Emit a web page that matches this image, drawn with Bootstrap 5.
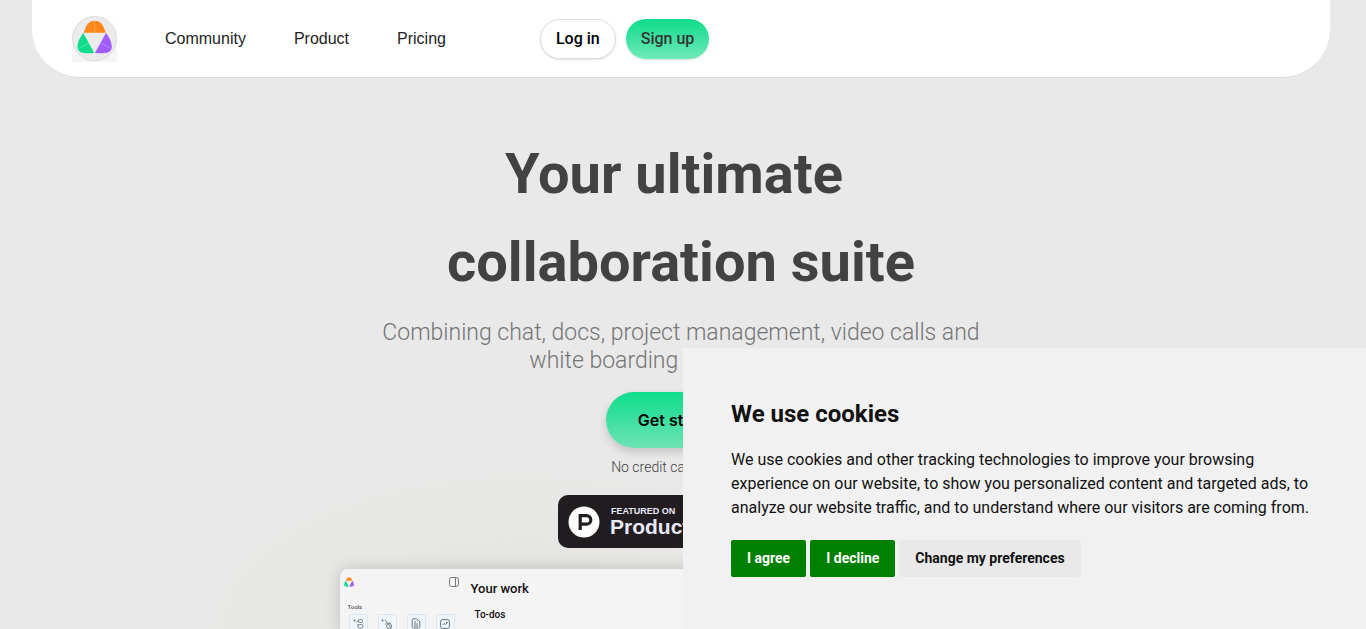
<!DOCTYPE html>
<html lang="en">
<head>
<meta charset="utf-8">
<meta name="viewport" content="width=device-width, initial-scale=1">
<title>Your ultimate collaboration suite</title>
<link href="https://cdn.jsdelivr.net/npm/bootstrap@5.3.0/dist/css/bootstrap.min.css" rel="stylesheet">
<style>
body { background: #e9e9e9; font-family: Roboto, sans-serif; color: #111; }
.page-shell { padding: 0 36px 0 32px; background: radial-gradient(ellipse 400px 200px at 520px 100%, #e0e0dc 0%, #e7e7e5 50%, #e9e9e9 100%); }
.site-nav { background: #fff; border-radius: 0 0 48px 48px; border-bottom: 1px solid #d9d9d9; padding: 16px 40px 15px; }
.site-nav .nav-link { font: 16px/24px "Liberation Sans", sans-serif; color: #222; padding: 0; }
.menu-links { gap: 48px; margin: 0 94px 0 48px; }
.account-links { gap: 10px; }
.pill { height: 40px; border-radius: 20px; font-size: 16px; line-height: 24px; font-weight: 500; padding: 0 15px 0 15px; box-shadow: 0 1px 2px #0000001f; }
.pill-login { background: #fff; border: 1px solid #dedede; color: #000; }
.pill-signup { background: linear-gradient(#0edc8c, #6fe9b9); color: #333; border: 0; }
.hero-title { font-size: 56px; line-height: 88px; font-weight: 700; color: #424242; margin: 52px 0 13px; white-space: pre-wrap; }
.hero-lead { font-size: 23px; line-height: 28px; font-weight: 300; color: #757575; max-width: 620px; margin: 0 0 17px; }
.cta { background: linear-gradient(#0edc8c, #6ce3b5); border-radius: 28px; height: 56px; padding: 0 32px; font: 600 16px/24px Inter, sans-serif; color: #000; box-shadow: 0 4px 8px #0000002b; border: 0; }
.fine-text { font-size: 14px; line-height: 20px; font-weight: 300; color: #444; margin: 9px 0 18px; }
.ph-badge { width: 246px; height: 53px; background: #211c20; border-radius: 10px; color: #e9e9fa; text-decoration: none; padding: 0 10px; gap: 10px; font-family: "Liberation Sans", sans-serif; font-weight: 700; }
.ph-small { font-size: 9px; line-height: 10px; padding-left: 1px; }
.ph-large { font-size: 21px; line-height: 22px; }
.preview { width: 683px; background: #f4f4f4; border-radius: 8px 8px 0 0; margin-top: 21px; box-shadow: 0 0 16px #0000002e; color: #111; }
.preview-side { width: 131px; padding: 8px 12px 0 4px; }
.tools-label { font-size: 6px; line-height: 8px; color: #555; margin: 16px 0 3px 4px; font-weight: 500; }
.tool-row { padding: 0 4px 0 5px; }
.tool-tile { width: 19px; height: 19px; background: #f0f7fc; border: 1px solid #dde6ec; border-radius: 2px; }
.work-title { font-size: 13px; line-height: 16px; font-weight: 500; margin: 12px 0 0; }
.todo-title { font-size: 10px; line-height: 12px; font-weight: 500; margin: 12px 0 0 4px; }
.cookie-box { width: 50%; background: #f1f1f1; padding: 48px 48px 52px; z-index: 10; }
.cookie-title { font-size: 24px; line-height: 36px; font-weight: 700; margin: 0 0 16px; }
.cookie-text { font-size: 16px; line-height: 24px; margin: 0 0 20px; }
.cookie-btn { font-size: 14px; line-height: 21px; font-weight: 700; border: 0; border-radius: 2px; padding: 8px 16px; color: #fff; background: #008000; }
.cookie-btn-plain { background: #e9e9e9; color: #111; }
@media (max-width: 767px) { .cookie-box { width: 100%; } .menu-links { margin: 0 24px; gap: 16px; } }
</style>
</head>
<body>
<svg width="0" height="0" class="position-absolute" aria-hidden="true">
  <symbol id="petals" viewBox="5 4 35 34">
    <path fill="#ff8718" d="M11.700 16.700C14 9 17 4.700 22.700 4.700S31.500 9 33.700 16.700Z"/>
    <path fill="#10dc8c" d="M11.300 17 22.300 37C16 37.500 5.500 38.500 5.500 31 5.500 26 8.500 20.500 11.300 17Z"/>
    <path fill="#a35cff" d="M34 17 22.900 37C29 37.500 39.800 38.500 39.800 31 39.800 26 37 20.500 34 17Z"/>
    <path stroke="#fff" stroke-opacity=".4" stroke-width=".6" d="M22.700 5v11.500M16.500 27 7.500 32M28.800 27l9 5"/>
  </symbol>
</svg>
<div class="page-shell vh-100 overflow-hidden">
  <header class="site-nav d-flex align-items-center">
    <a href="#" aria-label="Home" class="d-flex">
      <svg width="45" height="46" viewBox="0 0 45 46" aria-hidden="true">
        <defs><linearGradient id="base" x2="0" y2="1"><stop offset="0" stop-color="#fff"/><stop offset="1" stop-color="#f4f4f4"/></linearGradient></defs>
        <path fill="url(#base)" d="M0 0h45v46H0z"/>
        <circle cx="22.500" cy="22.500" r="22" fill="#ebebeb" stroke="#dcdcdc"/>
        <use href="#petals" x="5" y="4" width="35" height="34"/>
      </svg>
    </a>
    <nav class="menu-links d-flex" aria-label="Main">
      <a class="nav-link" href="#">Community</a>
      <a class="nav-link" href="#">Product</a>
      <a class="nav-link" href="#">Pricing</a>
    </nav>
    <div class="account-links d-flex">
      <button type="button" class="pill pill-login text-nowrap">Log in</button>
      <button type="button" class="pill pill-signup text-nowrap">Sign up</button>
    </div>
  </header>
  <main class="d-flex flex-column align-items-center text-center">
    <h1 class="hero-title">Your ultimate&nbsp;
collaboration suite</h1>
    <p class="hero-lead">Combining chat, docs, project management, video calls and white boarding all in one place</p>
    <button type="button" class="cta">Get started</button>
    <p class="fine-text">No credit card required</p>
    <a href="#" class="ph-badge d-flex align-items-center text-start">
      <svg width="32" height="32" viewBox="0 0 32 32" aria-hidden="true"><circle cx="16" cy="16" r="15.500" fill="#fff"/><path fill="none" stroke="#211c20" stroke-width="3.200" d="M12.200 24V9.600h6.300a4.300 4.300 0 0 1 0 8.600h-6.300"/></svg>
      <span class="d-flex flex-column"><span class="ph-small">FEATURED ON</span><span class="ph-large">Product Hunt</span></span>
    </a>
    <section class="preview d-flex text-start" aria-label="App preview">
      <div class="preview-side">
        <div class="d-flex justify-content-between align-items-center">
          <svg width="10" height="10" aria-hidden="true"><use href="#petals" width="10" height="10"/></svg>
          <svg width="10" height="10" viewBox="0 0 10 10" fill="none" stroke="#777" aria-hidden="true"><rect x=".5" y=".5" width="9" height="9" rx="2"/><path d="M6.500.5v9"/></svg>
        </div>
        <p class="tools-label">Tools</p>
        <div class="tool-row d-flex justify-content-between">
          <span class="tool-tile d-flex align-items-center justify-content-center"><svg width="11" height="11" viewBox="0 0 11 11" fill="none" stroke="#5e6870" stroke-width=".8"><path d="M.5 2.500h2M1.500 1.500v2M3.500 4.500l1.500-2 1 1M4 7.500l1.500-1"/><rect x="5.500" y="1.500" width="4" height="3" rx="1"/><rect x="5" y="6.500" width="5" height="3.500" rx="1.500"/></svg></span>
          <span class="tool-tile d-flex align-items-center justify-content-center"><svg width="12" height="12" viewBox="0 0 12 12" fill="none" stroke="#5e6870" stroke-width=".8"><path d="M.5 2.500h2M1.500 1.500v2M4 1.500l2 3-2 2M6 4.500l4 5M8 4l1 2"/><circle cx="8" cy="8" r="2.500"/><path d="m9.500 10 1.500 1.500"/></svg></span>
          <span class="tool-tile d-flex align-items-center justify-content-center"><svg width="10" height="11" viewBox="0 0 10 11" fill="none" stroke="#58636c" stroke-width=".9"><path d="M3 .8h2.500l3.300 3v4.700q0 1.500-1.500 1.500H2.700Q1.200 10 1.200 8.500V2.500Q1.200.8 3 .8ZM3 4h2M3 6h4M3 8h4"/></svg></span>
          <span class="tool-tile d-flex align-items-center justify-content-center"><svg width="10" height="10" viewBox="0 0 10 10" fill="none" stroke="#58636c" stroke-width=".9"><rect x=".6" y=".6" width="8.800" height="8.800" rx="2"/><path d="m2.500 6 1.500-1.500 1.500 1 2-2M6 3.500h1.500"/></svg></span>
        </div>
      </div>
      <div>
        <h2 class="work-title">Your work</h2>
        <h3 class="todo-title">To-dos</h3>
      </div>
    </section>
  </main>
</div>
<section class="cookie-box position-fixed bottom-0 end-0" role="dialog" aria-labelledby="cookie-heading">
  <h2 class="cookie-title" id="cookie-heading">We use cookies</h2>
  <p class="cookie-text">We use cookies and other tracking technologies to improve your browsing experience on our website, to show you personalized content and targeted ads, to analyze our website traffic, and to understand where our visitors are coming from.</p>
  <div class="d-flex flex-wrap gap-1">
    <button type="button" class="cookie-btn">I agree</button>
    <button type="button" class="cookie-btn">I decline</button>
    <button type="button" class="cookie-btn cookie-btn-plain">Change my preferences</button>
  </div>
</section>
<script src="https://cdn.jsdelivr.net/npm/bootstrap@5.3.0/dist/js/bootstrap.bundle.min.js"></script>
</body>
</html>
